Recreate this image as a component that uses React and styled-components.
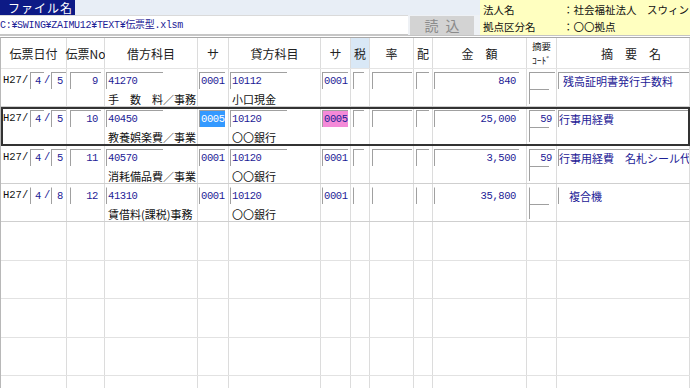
import React from "react";
import styled, { createGlobalStyle } from "styled-components";

const JP = `"Noto Sans CJK JP", "Noto Sans", sans-serif`;
const MONO = `"Liberation Mono", "Noto Sans CJK JP", monospace`;
const NAVY = "#1d2196";
const COLS = "66px 38px 93px 31px 92px 30px 19px 44px 19px 94px 30px 1fr";

const GlobalStyle = createGlobalStyle`
  html, body { margin: 0; padding: 0; background: #fff; }
  body { font-family: ${JP}; }
`;

const Page = styled.div`
  width: 690px;
  height: 388px;
  overflow: hidden;
`;
const Top = styled.div`
  display: flex;
  height: 35px;
  border-bottom: 1px solid #c4c4c4;
`;
const FilePane = styled.div`
  width: 480px;
  display: flex;
  flex-direction: column;
  background: #eef1f5;
`;
const LabelBar = styled.div`
  height: 15px;
  background: #e8eef6;
  display: flex;
`;
const FileLabel = styled.div`
  width: 75px;
  background: #0d1a86;
  color: #fff;
  font: 12px ${JP};
  line-height: 15px;
  padding-left: 8px;
  box-sizing: border-box;
  letter-spacing: 1px;
`;
const PathRow = styled.div`
  flex: 1;
  display: flex;
  gap: 2px;
`;
const PathBox = styled.div`
  width: 408px;
  height: 18px;
  background: #fff;
  border-top: 1px solid #dadada;
  border-bottom: 2px solid #c6c6c6;
  font: 10px ${MONO};
  letter-spacing: -0.3px;
  color: ${NAVY};
  line-height: 19px;
  white-space: nowrap;
`;
const LoadButton = styled.div`
  width: 64px;
  height: 19px;
  margin-top: 1px;
  background: #d3d3d3;
  color: #8a8a8a;
  font: 14px ${JP};
  line-height: 19px;
  text-align: center;
  letter-spacing: 7px;
  text-indent: 7px;
`;
const Info = styled.div`
  flex: 1;
  background: #ffffc0;
  display: grid;
  grid-template-columns: 80px 1fr;
  grid-auto-rows: 17px;
  padding: 1px 0 0 3px;
  font: 10.5px ${JP};
  line-height: 17px;
  color: #111;
  white-space: nowrap;
  overflow: hidden;
`;

const Table = styled.div`
  margin-top: 1px;
  border-top: 1px solid #a8a8a8;
  border-left: 1px solid #b8b8b8;
`;
const HeadRow = styled.div`
  display: grid;
  grid-template-columns: ${COLS};
  height: 30px;
  border-bottom: 1px solid #e4e4e4;
`;
const HeadCell = styled.div`
  display: flex;
  align-items: center;
  justify-content: center;
  border-right: 1px solid #dcdcdc;
  background: ${(p) => (p.$active ? "#d9e8f6" : "#fff")};
  font: 12px ${JP};
  color: #222;
  white-space: nowrap;
  padding-left: ${(p) => p.$pad || 0}px;
`;
const SmallHead = styled.div`
  display: flex;
  flex-direction: column;
  align-items: center;
  align-self: flex-start;
  margin-top: 1px;
  font: 9.5px ${JP};
  line-height: 14px;
`;
const Row = styled.div`
  display: grid;
  grid-template-columns: ${COLS};
  height: ${(p) => p.$h}px;
  box-sizing: border-box;
  border-bottom: 1px solid ${(p) => (p.$empty ? "#e2e2e2" : "#cfcfcf")};
  ${(p) => p.$selected && "outline: 2px solid #333; outline-offset: -2px;"}
`;
const Cell = styled.div`
  border-right: 1px solid #dcdcdc;
  display: flex;
  flex-direction: column;
  padding-top: 3px;
  min-width: 0;
  overflow: hidden;
`;
const Line = styled.div`
  display: flex;
  align-items: flex-start;
  height: 17px;
  padding-left: ${(p) => (p.$pad == null ? 2 : p.$pad)}px;
`;
const Field = styled.div`
  flex: none;
  width: ${(p) => p.$w}px;
  height: ${(p) => p.$h || 17}px;
  box-sizing: border-box;
  border-top: 1px solid ${(p) => (p.$flat ? "transparent" : "#a0a0a0")};
  border-left: 1px solid #a0a0a0;
  font: 10.5px ${MONO};
  letter-spacing: -0.4px;
  line-height: 16px;
  color: ${(p) => p.$color || NAVY};
  background: ${(p) => p.$bg || "transparent"};
  text-align: ${(p) => p.$align || "left"};
  padding: 0 ${(p) => (p.$align === "right" ? 3 : 0)}px 0 1px;
  white-space: nowrap;
`;
const Era = styled.span`
  width: 27px;
  font: 10.5px ${MONO};
  line-height: 16px;
  color: #111;
`;
const Slash = styled.span`
  width: 7px;
  font: 10.5px ${MONO};
  line-height: 16px;
  color: ${NAVY};
`;
const Label = styled.div`
  font: 11px ${JP};
  line-height: 14px;
  margin-top: 3px;
  padding-left: 3px;
  color: #111;
  white-space: nowrap;
`;
const CodeStack = styled.div`
  display: flex;
  flex-direction: column;
  padding-left: 2px;
`;
const Desc = styled.div`
  height: 17px;
  margin-left: 1px;
  box-sizing: border-box;
  border-top: 1px solid ${(p) => (p.$flat ? "transparent" : "#a0a0a0")};
  border-left: 1px solid #a0a0a0;
  font: 11px ${JP};
  line-height: 16px;
  color: ${NAVY};
  padding-left: ${(p) => p.$indent}px;
  white-space: nowrap;
`;

const entries = [
  { m: 4, d: 5, no: 9, dr: "41270", drName: "手　数　料／事務", s1: "0001", cr: "10112", crName: "小口現金", s2: "0001", amt: "840", code: "", desc: "残高証明書発行手数料", indent: 4 },
  { m: 4, d: 5, no: 10, dr: "40450", drName: "教養娯楽費／事業", s1: "0005", s1Sel: true, cr: "10120", crName: "〇〇銀行", s2: "0005", s2Pink: true, amt: "25,000", code: "59", desc: "行事用経費", indent: 0, selected: true },
  { m: 4, d: 5, no: 11, dr: "40570", drName: "消耗備品費／事業", s1: "0001", cr: "10120", crName: "〇〇銀行", s2: "0001", amt: "3,500", code: "59", desc: "行事用経費　名札シール代", indent: 0 },
  { m: 4, d: 8, no: 12, dr: "41310", drName: "賃借料(課税)事務", s1: "0001", cr: "10120", crName: "〇〇銀行", s2: "0001", amt: "35,800", code: "", desc: "複合機", indent: 10, flat: true },
];

const emptyHeights = [39, 38, 39, 38, 39];

function EntryRow({ e }) {
  const f = e.flat;
  return (
    <Row $h={e.selected ? 39 : 38} $selected={e.selected}>
      <Cell>
        <Line>
          <Era>H27/</Era>
          <Field $w={14} $align="right" $flat={f}>{e.m}</Field>
          <Slash>/</Slash>
          <Field $w={15} $align="right" $flat={f}>{e.d}</Field>
        </Line>
      </Cell>
      <Cell>
        <Line $pad={3}>
          <Field $w={31} $align="right" $flat={f}>{e.no}</Field>
        </Line>
      </Cell>
      <Cell>
        <Line $pad={1}>
          <Field $w={57} $flat={f}>{e.dr}</Field>
        </Line>
        <Label>{e.drName}</Label>
      </Cell>
      <Cell>
        <Line $pad={1}>
          <Field $w={26} $flat={f} $bg={e.s1Sel ? "#3399ff" : undefined} $color={e.s1Sel ? "#fff" : undefined}>
            {e.s1}
          </Field>
        </Line>
      </Cell>
      <Cell>
        <Line $pad={1}>
          <Field $w={57} $flat={f}>{e.cr}</Field>
        </Line>
        <Label>{e.crName}</Label>
      </Cell>
      <Cell>
        <Line $pad={1}>
          <Field $w={26} $flat={f} $bg={e.s2Pink ? "#f48ad8" : undefined}>{e.s2}</Field>
        </Line>
      </Cell>
      <Cell>
        <Line $pad={2}>
          <Field $w={11} $flat={f} />
        </Line>
      </Cell>
      <Cell>
        <Line $pad={2}>
          <Field $w={40} $flat={f} />
        </Line>
      </Cell>
      <Cell>
        <Line $pad={2}>
          <Field $w={13} $flat={f} />
        </Line>
      </Cell>
      <Cell>
        <Line $pad={1}>
          <Field $w={85} $align="right" $flat={f}>{e.amt}</Field>
        </Line>
      </Cell>
      <Cell>
        <CodeStack>
          <Field $w={26} $align="right" $flat={f}>{e.code}</Field>
          <Field $w={20} $h={15} />
        </CodeStack>
      </Cell>
      <Cell>
        <Desc $indent={e.indent} $flat={f}>{e.desc}</Desc>
      </Cell>
    </Row>
  );
}

function EmptyRow({ h }) {
  return (
    <Row $h={h} $empty>
      {Array.from({ length: 12 }).map((_, i) => (
        <Cell key={i} />
      ))}
    </Row>
  );
}

export default function App() {
  return (
    <Page>
      <GlobalStyle />
      <Top>
        <FilePane>
          <LabelBar>
            <FileLabel>ファイル名</FileLabel>
          </LabelBar>
          <PathRow>
            <PathBox>C:¥SWING¥ZAIMU12¥TEXT¥伝票型.xlsm</PathBox>
            <LoadButton>読込</LoadButton>
          </PathRow>
        </FilePane>
        <Info>
          <span>法人名</span>
          <span>：社会福祉法人　スウィン</span>
          <span>拠点区分名</span>
          <span>：〇〇拠点</span>
        </Info>
      </Top>
      <Table>
        <HeadRow>
          <HeadCell>伝票日付</HeadCell>
          <HeadCell>伝票No</HeadCell>
          <HeadCell>借方科目</HeadCell>
          <HeadCell>サ</HeadCell>
          <HeadCell>貸方科目</HeadCell>
          <HeadCell>サ</HeadCell>
          <HeadCell $active>税</HeadCell>
          <HeadCell>率</HeadCell>
          <HeadCell>配</HeadCell>
          <HeadCell>金　額</HeadCell>
          <HeadCell>
            <SmallHead>
              <span>摘要</span>
              <span>ｺｰﾄﾞ</span>
            </SmallHead>
          </HeadCell>
          <HeadCell $pad={16}>摘　要　名</HeadCell>
        </HeadRow>
        {entries.map((e) => (
          <EntryRow key={e.no} e={e} />
        ))}
        {emptyHeights.map((h, i) => (
          <EmptyRow key={i} h={h} />
        ))}
      </Table>
    </Page>
  );
}
